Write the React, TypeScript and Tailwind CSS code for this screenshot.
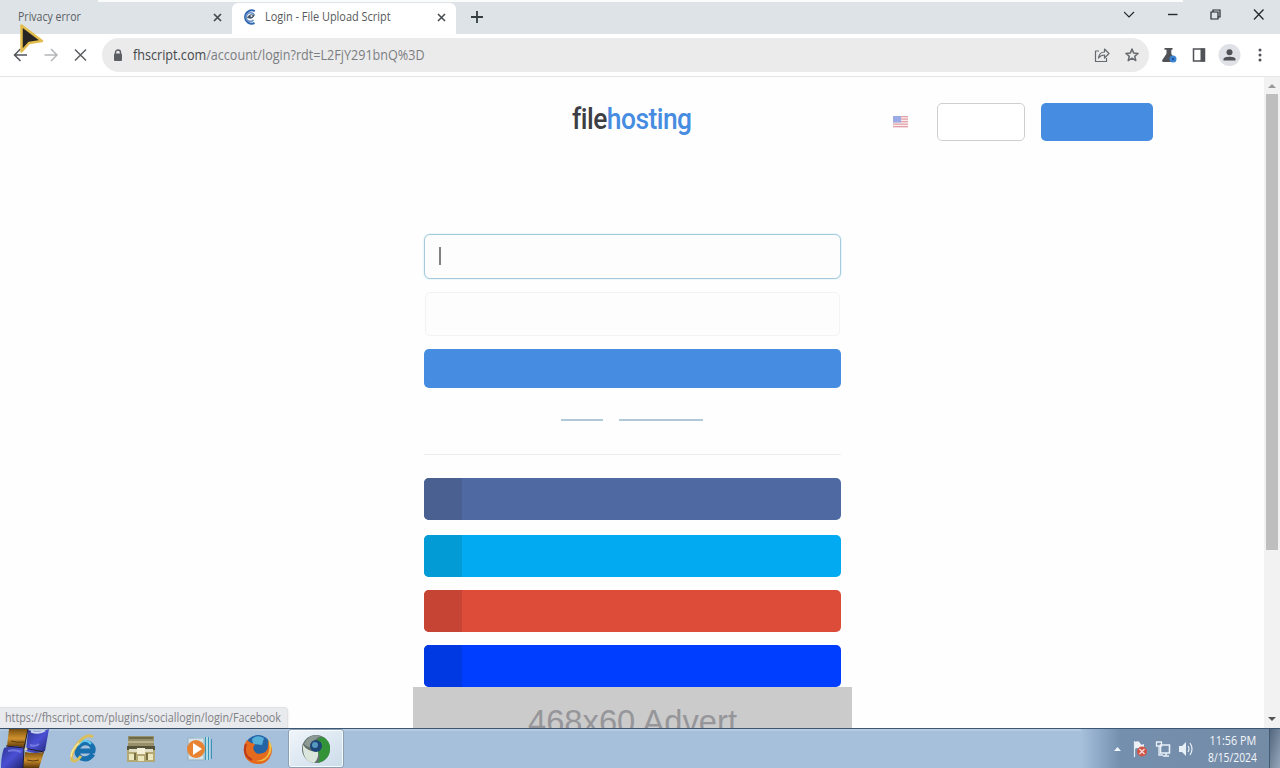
import type { ReactNode } from "react";

const socialButtons = [
  { name: "facebook", bar: "bg-[#4f69a2]", icon: "bg-[#4a6091]", gap: "mb-[15px]" },
  { name: "twitter", bar: "bg-[#02abf1]", icon: "bg-[#039bd5]", gap: "mb-[13px]" },
  { name: "google", bar: "bg-[#dd4b39]", icon: "bg-[#c54433]", gap: "mb-[13px]" },
  { name: "other", bar: "bg-[#003eff]", icon: "bg-[#0038e2]", gap: "" },
];

function TabBar() {
  return (
    <div className="relative flex h-[34px] shrink-0 bg-[#dde3e7]">
      <div className="absolute left-[98px] top-0 h-[2px] w-[1085px] bg-[#fafcfc]" />
      <div className="flex w-[232px] items-center justify-between rounded-br-[6px] pl-[18px] pr-[10px]">
        <span className="origin-left scale-x-[0.88] whitespace-nowrap text-[12px] text-[#5b6064]">Privacy error</span>
        <svg className="h-[9px] w-[9px]" viewBox="0 0 9 9" fill="none" stroke="#44494d" strokeWidth="1.7">
          <path d="M1 1l7 7M8 1L1 8" />
        </svg>
      </div>
      <div className="relative mt-[3px] flex h-[31px] w-[224px] items-center rounded-t-[6px] bg-white pb-[3px] pl-[10px] pr-[10px]">
        <svg className="h-[16px] w-[16px] shrink-0" viewBox="0 0 16 16" fill="none">
          <path d="M12.800 2.200A6.600 6.600 0 1 0 12.500 14" stroke="#3168b4" strokeWidth="2" />
          <path d="M12.500 6.500A4.300 4.300 0 1 0 11.500 11.200" stroke="#6d93c4" strokeWidth="1.600" />
          <path d="M5.500 8.500q2-4 6.500-2-1.500 4-6.500 2" fill="#455368" stroke="#455368" />
          <circle cx="9.500" cy="7" r="1" fill="#dce8f4" />
        </svg>
        <span className="ml-[7px] w-[160px] origin-left scale-x-[0.91] whitespace-nowrap text-[12px] text-[#56595c]">Login - File Upload Script</span>
        <svg className="ml-auto h-[9px] w-[9px] shrink-0" viewBox="0 0 9 9" fill="none" stroke="#44494d" strokeWidth="1.5">
          <path d="M1 1l7 7M8 1L1 8" />
        </svg>
      </div>
      <div className="flex h-full items-center pl-[15px]">
        <svg className="h-[12px] w-[12px]" viewBox="0 0 12 12" fill="none" stroke="#363d42" strokeWidth="1.8">
          <path d="M6 0v12M0 6h12" />
        </svg>
      </div>
      <div className="ml-auto flex h-[29px] items-center pr-[15px] text-[#25292c]">
        <svg className="h-[12px] w-[141px]" viewBox="0 0 141 12" fill="none" stroke="currentColor" strokeWidth="1.2">
          <path d="M0 3l5 5 5-5" />
          <path d="M44 5.500h9.500" strokeWidth="1.4" />
          <path d="M87 3h7v7h-7zM89 3V1h7v7h-2" />
          <path d="M130 .5l9.500 10M139.500 .5L130 10.500" strokeWidth="1.3" />
        </svg>
      </div>
    </div>
  );
}

function Toolbar() {
  return (
    <div className="flex h-[43px] shrink-0 items-center border-b border-[#e5e5e5] bg-white">
      <svg className="h-[16px] w-[90px] shrink-0" viewBox="0 0 90 16" fill="none" strokeWidth="1.5">
        <path d="M27 8H14.500M20.500 2l-6 6 6 6" stroke="#505459" />
        <path d="M44.500 8H57M51 2l6 6-6 6" stroke="#b4b6b9" />
        <path d="M75 2.500l11 11M86 2.500l-11 11" stroke="#5a5d61" />
      </svg>
      <div className="ml-[12px] flex h-[34px] w-[1047px] items-center rounded-full bg-[#ebebec] pl-[11px] pr-[9px]">
        <svg className="h-[13px] w-[10px] shrink-0" viewBox="0 0 10 13" fill="none">
          <path d="M2.500 5V3.500a2.500 2.500 0 0 1 5 0V5" stroke="#5c5f64" strokeWidth="1.4" />
          <rect x="1" y="4.500" width="8" height="7.500" rx="1" fill="#5c5f64" />
        </svg>
        <span className="mb-[1px] ml-[10px] origin-left scale-x-[0.9] whitespace-nowrap text-[14px] text-[#7b7e81]">
          <span className="text-[#44484b]">fhscript.com</span>/account/login?rdt=L2FjY291bnQ%3D
        </span>
        <svg className="ml-auto h-[16px] w-[46px] shrink-0" viewBox="0 0 46 16" fill="none" stroke="#66696d" strokeWidth="1.2" strokeLinejoin="round">
          <path d="M5 4H1.500v10.500h11V11M4.500 11c.5-4 3-6 6-6V2l4.500 4.500L10.500 11V8c-2.500 0-4.500 1-6 3z" />
          <path d="M38 2l1.700 4.100 4.400.3-3.400 2.900 1.100 4.300-3.800-2.400-3.800 2.400 1.100-4.300-3.400-2.900 4.400-.3z" strokeWidth="1.5" />
        </svg>
      </div>
      <svg className="ml-[12px] h-[24px] w-[104px] shrink-0" viewBox="0 0 104 24" fill="none">
        <path d="M3.500 5h8v1.800h-1.200v4l4.200 6.200c.5 1-.1 2-1.200 2H2.500c-1.100 0-1.700-1-1.200-2l4.200-6.200v-4H3.500z" fill="#505257" />
        <circle cx="12" cy="16" r="3.500" fill="#3d83d2" />
        <circle cx="12" cy="16" r="1.200" fill="#1756a3" />
        <path d="M32.500 6h11v12h-11z" stroke="#505257" strokeWidth="1.5" />
        <path d="M39.500 5.500H44v13h-4.500z" fill="#505257" />
        <circle cx="68.500" cy="12" r="11" fill="#dfe1e6" />
        <circle cx="68.500" cy="9.200" r="3" fill="#505257" />
        <path d="M62.500 17.500v-1.500c0-3 12-3 12 0v1.500z" fill="#505257" />
        <g fill="#505257"><circle cx="99" cy="7" r="1.500" /><circle cx="99" cy="12" r="1.500" /><circle cx="99" cy="17" r="1.500" /></g>
      </svg>
    </div>
  );
}

function Header() {
  return (
    <header className="flex h-[64px] items-start">
      <div className="ml-[572px] mt-[24px] w-[120px]">
        <span className="block origin-left scale-x-[0.88] whitespace-nowrap font-['Roboto','Open_Sans',sans-serif] text-[30px] font-medium leading-[36px] tracking-[-0.6px] text-[#3d3e43]">
          file<span className="text-[#468ce1]">hosting</span>
        </span>
      </div>
      <svg className="ml-[201px] mt-[39px] h-[12px] w-[15px]" viewBox="0 0 15 12">
        <path d="M0 0h15v12H0z" fill="#f7eef1" />
        <path d="M0 .7h15M0 3.200h15M0 5.700h15M0 8.200h15M0 10.700h15" stroke="#e4a1a6" strokeWidth="1.200" />
        <path d="M0 0h8v6.500H0z" fill="#9caae5" />
      </svg>
      <button aria-label="Login" className="ml-[29px] mt-[26px] h-[38px] w-[88px] rounded-[5px] border border-[#cfcfd1] bg-white" />
      <button aria-label="Register" className="ml-[16px] mt-[26px] h-[38px] w-[111.5px] rounded-[5px] bg-[#468de1]" />
    </header>
  );
}

function LoginForm() {
  return (
    <main className="ml-[413px] mt-[93px] flex w-[439px] flex-col">
      <div className="ml-[10.500px] flex w-[417px] flex-col">
        <div className="flex h-[45px] items-center rounded-[6px] border border-[#a5cadd] bg-[#fdfdfd] pl-[14px] shadow-[0_0_2px_#b8e2f4]">
          <div className="mb-[2px] h-[18px] w-[2px] bg-[#808285]" />
        </div>
        <div className="mx-[1px] mt-[13px] h-[44px] rounded-[5px] border border-[#f3f3f4] bg-[#fdfdfd]" />
        <button aria-label="Log in" className="mt-[13px] h-[39px] rounded-[5px] bg-[#468de1]" />
        <div className="ml-[137.500px] mt-[31px] flex gap-[16px]">
          <div className="h-[2px] w-[42px] bg-[#b1c8d9]" />
          <div className="h-[2px] w-[84px] bg-[#b1c8d9]" />
        </div>
        <div className="mb-[23px] mt-[33px] h-px bg-[#eeeeef]" />
        {socialButtons.map((b) => (
          <button key={b.name} aria-label={b.name} className={`flex h-[42px] shrink-0 overflow-hidden rounded-[5px] ${b.bar} ${b.gap}`}>
            <div className={`h-full w-[38px] ${b.icon}`} />
          </button>
        ))}
      </div>
      <div className="flex h-[60px] justify-center bg-[#cbcbcb]">
        <span className="mt-[15px] whitespace-nowrap font-['Liberation_Sans',Arial,sans-serif] text-[32.700px] leading-[40px] text-[#96969a]">
          468x60 Advert
        </span>
      </div>
    </main>
  );
}

function Scrollbar() {
  return (
    <div className="flex w-[16px] shrink-0 flex-col items-center bg-[#f2f2f2]">
      <svg className="h-[17px] w-[8px]" viewBox="0 0 8 17"><path d="M0 11l4-4 4 4z" fill="#999" /></svg>
      <div className="h-[456px] w-[12px] bg-[#bebebf]" />
      <svg className="mt-auto h-[17px] w-[8px]" viewBox="0 0 8 17"><path d="M0 6l4 4 4-4z" fill="#555" /></svg>
    </div>
  );
}

function TaskItem({ children, active }: { children: ReactNode; active?: boolean }) {
  return (
    <div className={active
      ? "flex h-[39px] w-[56px] shrink-0 items-center justify-center rounded-[3px] border border-[#8ba0b3] bg-linear-to-br from-[#f0f5fa] to-[#cbdcea] shadow-[inset_0_0_0_1px_#f7fbff]"
      : "flex h-[39px] w-[58px] shrink-0 items-center justify-center"}>
      {children}
    </div>
  );
}

function Taskbar() {
  return (
    <div className="flex h-[40px] shrink-0 border-t border-[#3d5674] bg-[#a6c0dc] shadow-[inset_0_2px_1px_#b8cde3]">
      <svg className="h-[39px] w-[54px] shrink-0" viewBox="0 0 54 39">
        <defs>
          <linearGradient id="gold" x2="0" y2="1"><stop stopColor="#7a5010" /><stop offset=".5" stopColor="#cf912d" /><stop offset="1" stopColor="#593609" /></linearGradient>
          <linearGradient id="indigo" x2="1" y2="1"><stop stopColor="#2c3390" /><stop offset=".5" stopColor="#4a50d4" /><stop offset="1" stopColor="#20246e" /></linearGradient>
        </defs>
        <path d="M9 0h19l-3 18q-9 2-18-1z" fill="url(#gold)" />
        <path d="M28 1q10 4 21-1l-4 22q-9 4-19 0z" fill="url(#indigo)" />
        <path d="M4 19q10-4 20 0l-1 20H1q0-12 3-20z" fill="url(#indigo)" />
        <path d="M25 23q9 2 19 0l-5 16H23z" fill="url(#gold)" />
        <path d="M28 0l-4 19-1 20M6 17l18 2 20 4" stroke="#201c2a" fill="none" />
        <path d="M31 2.500q8 3 14-1" stroke="#ccd7ef" strokeWidth="2" fill="none" />
        <path d="M11 12q6 2 13 1M27 31q6 2 12 0" stroke="#5b3b10" fill="none" />
        <path d="M8 22q7-2 13 1M30 16q5 2 9-1" stroke="#7377e2" strokeWidth="2" fill="none" />
        <circle cx="26" cy="20" r="1.500" fill="#dcd2b3" />
      </svg>
      <TaskItem>
        <svg className="h-[32px] w-[32px]" viewBox="0 0 32 32" fill="none">
          <path d="M26 21q-5 7-12 4-6-4-3-11 5-7 12-3 4 3 3 7H12" stroke="#176fae" strokeWidth="5" />
          <path d="M11 12q7-8 13-1" stroke="#64cbed" strokeWidth="2" />
          <path d="M26 4Q20 0 12 9 3 20 5 27q4 3 9-4" stroke="#d9bf5c" strokeWidth="3" />
          <path d="M4 24q0-7 8-14" stroke="#fae99d" strokeWidth="1.500" />
        </svg>
      </TaskItem>
      <TaskItem>
        <svg className="h-[28px] w-[30px]" viewBox="0 0 30 28">
          <path d="M2 1h26v10H2z" fill="#968f69" /><path d="M3 2h24v2H3z" fill="#6d6a4b" />
          <path d="M2 6h26v2H2z" fill="#b6b08d" /><path d="M1 11h28v4H1z" fill="#56533b" />
          <path d="M1 15h28v12H1z" fill="#b4a873" /><path d="M3 14h24v3H3z" fill="#e2dec4" />
          <path d="M11 13h8v6h-8z" fill="#f3efd8" />
          <path d="M3 19h5v6H3zM22 19h5v6h-5zM12 21h6v5h-6z" fill="#ede7bf" />
          <path d="M8 18h2v7H8zM20 18h2v7h-2z" fill="#786f43" />
        </svg>
      </TaskItem>
      <TaskItem>
        <svg className="h-[28px] w-[30px]" viewBox="0 0 30 28">
          <path d="M10 2h16v23H10z" fill="#b0dce8" /><path d="M21.500 2v23M24.500 2v23M27.500 4v20" stroke="#3b94b8" />
          <path d="M4 3h16v22H4z" fill="#d5e3ea" stroke="#94afbc" />
          <circle cx="12" cy="14" r="9" fill="#e88331" /><path d="M9 8l9 6-9 6z" fill="white" />
        </svg>
      </TaskItem>
      <TaskItem>
        <svg className="ml-[2px] h-[30px] w-[30px]" viewBox="0 0 30 30">
          <circle cx="15" cy="14" r="13" fill="#2464a5" /><path d="M9 5q5-5 12-1l-2 7-9-1z" fill="#55afd7" />
          <path d="M4 6l4 3 4 1-2 4q2 8 10 5 6-2 5-11 6 5 3 13-4 10-14 9Q2 29 1 18 0 11 4 6z" fill="#e56a1e" />
          <path d="M25 5q6 7 2 15-5 9-14 7 11-1 13-10 1-5-1-12z" fill="#f2bf46" />
          <path d="M3 10q-4 11 6 16" stroke="#bb3a1d" strokeWidth="2" fill="none" />
        </svg>
      </TaskItem>
      <div className="ml-[2px]">
        <TaskItem active>
          <svg className="h-[30px] w-[30px]" viewBox="0 0 30 30">
            <circle cx="15" cy="15" r="14" fill="#60716b" />
            <path d="M15 15Q12 5 22 3q8 4 7 13-1 10-12 13 4-6-2-14z" fill="#329339" />
            <path d="M2 11q6 8 15 6 1 8-4 12Q1 27 2 11z" fill="#dce5dc" />
            <path d="M3 10Q8-1 20 2q-7 2-8 10-5 3-9-2z" fill="#8c9995" />
            <circle cx="15" cy="12" r="6" fill="#1d4577" /><circle cx="14" cy="11" r="3" fill="#5798bf" />
          </svg>
        </TaskItem>
      </div>
      <div className="ml-auto flex w-[199px] shrink-0 items-center bg-linear-to-r from-[#a6c0dc] via-[#748fae] via-20% to-[#748ba5]">
        <svg className="ml-[32px] h-[18px] w-[80px] shrink-0" viewBox="0 0 80 18" fill="none">
          <path d="M1 11l3.500-4L8 11z" fill="#eef5fb" />
          <path d="M21.500 1v16" stroke="#e5edf3" strokeWidth="1.200" /><path d="M22 2q4-2 5 1t4 1v6q-3 1-5-1t-4 0z" fill="#eef2f6" />
          <circle cx="29" cy="11.500" r="5" fill="#d05548" /><path d="M26.500 9l5 5M31.500 9l-5 5" stroke="#f5dedb" strokeWidth="1.300" />
          <path d="M47.500 5h9v8h-9zM50 16h6M53 13v3" stroke="#e8f0f7" strokeWidth="1.600" />
          <path d="M43.500 2h5v4h-5zM46 6v9h4" stroke="#e8f0f7" strokeWidth="1.300" />
          <path d="M66 6h3l4-4v14l-4-4h-3z" fill="#e8f0f7" /><path d="M75 6q2 3 0 6M77 3q4 6 0 12" stroke="#e8f0f7" strokeWidth="1.200" />
        </svg>
        <div className="ml-[3px] flex w-[73px] shrink-0 flex-col items-center text-[12px] leading-[17px] text-[#f3f6fa]">
          <span className="scale-x-[0.9] whitespace-nowrap">11:56 PM</span>
          <span className="scale-x-[0.86] whitespace-nowrap">8/15/2024</span>
        </div>
        <div className="ml-auto h-full w-[13px] shrink-0 border-l border-[#435a73] bg-linear-to-br from-[#53677e] to-[#9caec0]" />
      </div>
    </div>
  );
}

export default function App() {
  return (
    <div className="relative flex h-[768px] w-[1280px] flex-col overflow-hidden bg-white font-['Open_Sans','Noto_Sans',sans-serif]">
      <TabBar />
      <Toolbar />
      <div className="flex h-[651px] shrink-0 overflow-hidden">
        <div className="w-[1264px] shrink-0 bg-[#fefefe]"><Header /><LoginForm /></div>
        <Scrollbar />
      </div>
      <Taskbar />
      <div className="absolute left-0 top-[707px] flex h-[21px] w-[288px] items-center rounded-tr-[4px] border-r border-t border-[#e2e2e4] bg-[#e9eaed] pl-[5px] shadow-sm">
        <span className="origin-left scale-x-[0.897] whitespace-nowrap text-[12px] text-[#7e8185]">https://fhscript.com/plugins/sociallogin/login/Facebook</span>
      </div>
      <svg className="absolute left-[18px] top-[22px] h-[34px] w-[28px]" viewBox="0 0 28 34">
        <path d="M3.500 3.500v26l7.500-8.500 13-2z" fill="#262523" stroke="#e3bd4c" strokeWidth="2.500" strokeLinejoin="round" />
      </svg>
    </div>
  );
}
